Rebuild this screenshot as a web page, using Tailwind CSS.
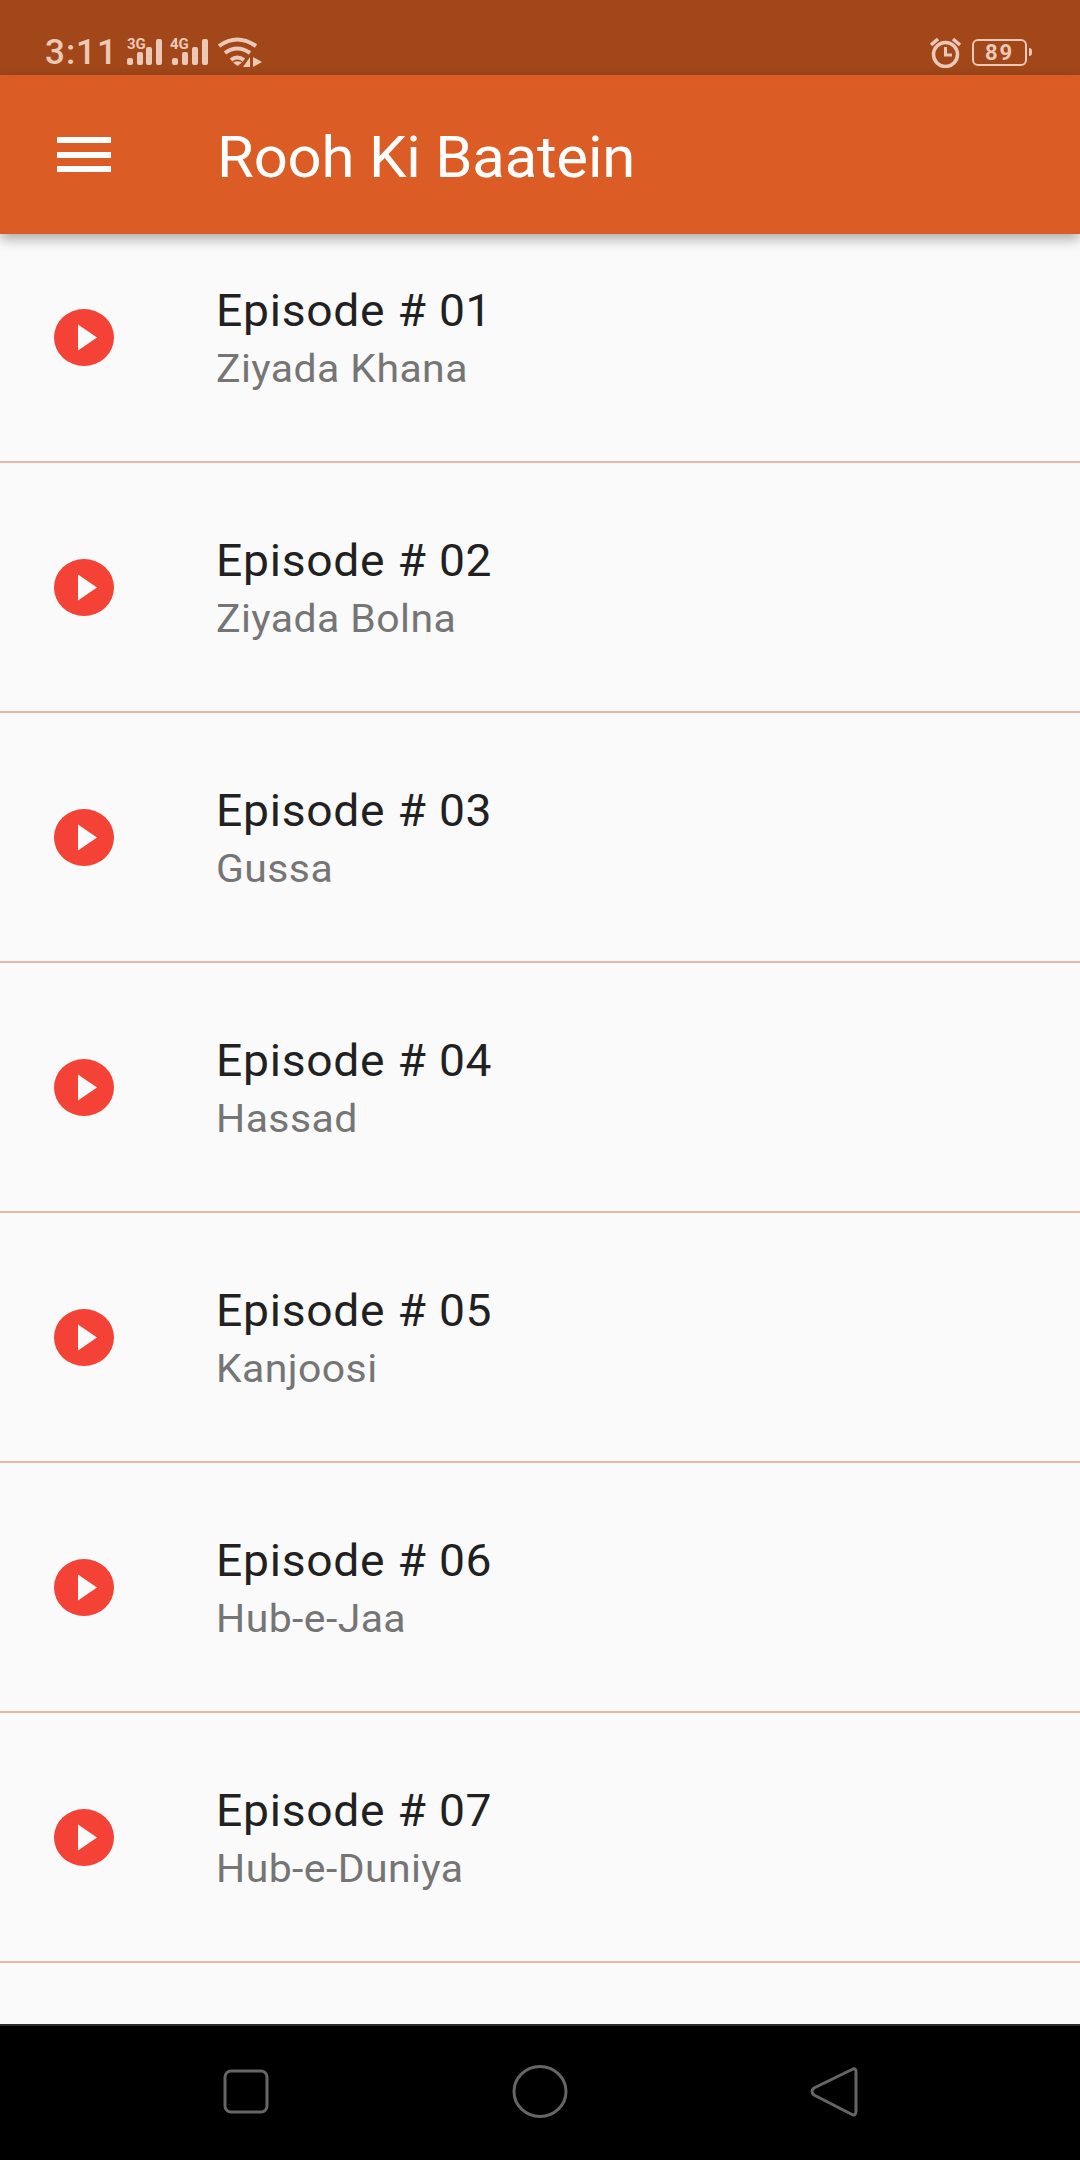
<!DOCTYPE html>
<html lang="en">
<head>
    <meta charset="UTF-8">
    <meta name="viewport" content="width=device-width, initial-scale=1.0">
    <title>Rooh Ki Baatein</title>
    <script src="https://cdn.jsdelivr.net/npm/@tailwindcss/browser@4"></script>
</head>
<body class="bg-[#fafafa] font-['Roboto',sans-serif]">
<div class="w-[1080px] h-[2160px] flex flex-col overflow-hidden">

    <!-- status bar -->
    <div class="h-[75px] shrink-0 bg-[#a1471a] text-[#ecc8b6] relative">
        <span class="absolute left-[45px] top-[33px] text-[35px] leading-[40px] tracking-[1px] font-medium">3:11</span>
        <svg class="absolute left-[127px] top-[38px]" width="82" height="28" viewBox="0 0 82 28" fill="currentColor">
            <rect x="0" y="20" width="6" height="7" rx="2"/><rect x="10" y="14" width="6" height="13" rx="2"/><rect x="19" y="9" width="6" height="18" rx="2"/><rect x="29" y="1" width="6" height="26" rx="2"/>
            <rect x="45" y="20" width="6" height="7" rx="2"/><rect x="55" y="14" width="6" height="13" rx="2"/><rect x="65" y="9" width="6" height="18" rx="2"/><rect x="75" y="1" width="6" height="26" rx="2"/>
        </svg>
        <span class="absolute left-[127px] top-[35px] text-[15px] leading-[18px] font-bold">3G</span>
        <span class="absolute left-[170px] top-[35px] text-[15px] leading-[18px] font-bold">4G</span>
        <svg class="absolute left-[217px] top-[36px]" width="46" height="32" viewBox="0 0 46 32" fill="none" stroke="currentColor" stroke-width="4">
            <path d="M2 10 Q20 -3 39 10"/><path d="M8 17 Q20 8 33 17"/><path d="M14 24 Q20 19 27 24"/>
            <path d="M20.500 30 L16 26.500 Q20.500 24 25 26.500 Z" fill="currentColor" stroke="none"/>
            <path d="M33 21 V31 H26 Z M36 21 V31 L45 26 Z" fill="currentColor" stroke="none"/>
        </svg>

        <svg class="absolute left-[930px] top-[37px]" width="32" height="31" viewBox="0 0 32 31" fill="none" stroke="currentColor">
            <circle cx="15.500" cy="17.500" r="12" stroke-width="3.500"/>
            <path d="M15.500 10 V18 H22" stroke-width="3"/>
            <path d="M1 8 L8 2 M23 2 L30 8" stroke-width="3.500"/>
        </svg>
        <div class="absolute left-[972px] top-[39px] w-[55px] h-[27px] rounded-[6px] border-2 border-[#ecc8b6] flex items-center justify-center text-[22px] leading-none font-bold tracking-[2px]">89</div>
        <div class="absolute left-[1029px] top-[48px] w-[3px] h-[8px] rounded-r-sm bg-[#ecc8b6]"></div>
    </div>

    <!-- app bar -->
    <header class="h-[159px] shrink-0 bg-[#db5c24] shadow-[0_5px_12px_rgba(0,0,0,0.32)] relative z-10 flex items-center">
        <div class="w-[217px] pl-[57px] shrink-0">
            <div class="w-[54px] h-[35px] flex flex-col justify-between">
                <div class="h-[6px] bg-white"></div>
                <div class="h-[6px] bg-white"></div>
                <div class="h-[6px] bg-white"></div>
            </div>
        </div>
        <h1 class="text-white text-[57px] leading-[60px] tracking-[-0.2px] mt-[7px] origin-left scale-x-[1.05]">Rooh Ki Baatein</h1>
    </header>

    <!-- episodes -->
    <main class="flex-1 overflow-hidden">
        <ul class="-mt-[21px]">
            <li class="h-[250px] border-b-2 border-[#e9b8a0] flex items-center">
                <div class="w-[216px] pl-[54px] shrink-0"><svg width="60" height="57" viewBox="0 0 60 57"><ellipse cx="30" cy="28.500" rx="30" ry="28.500" fill="#f44336"/><path d="M24 15.500 L43 28.500 L24 41.500 Z" fill="#fafafa"/></svg></div>
                <div class="mt-[1px]">
                    <p class="text-[#212121] text-[44px] leading-[56px] tracking-[0.7px] origin-left scale-x-[1.05]">Episode # 01</p>
                    <p class="text-[#757575] text-[39px] leading-[48px] tracking-[0.4px] mt-[6px] origin-left scale-x-[1.05]">Ziyada Khana</p>
                </div>
            </li>
            <li class="h-[250px] border-b-2 border-[#e9b8a0] flex items-center">
                <div class="w-[216px] pl-[54px] shrink-0"><svg width="60" height="57" viewBox="0 0 60 57"><ellipse cx="30" cy="28.500" rx="30" ry="28.500" fill="#f44336"/><path d="M24 15.500 L43 28.500 L24 41.500 Z" fill="#fafafa"/></svg></div>
                <div class="mt-[1px]">
                    <p class="text-[#212121] text-[44px] leading-[56px] tracking-[0.7px] origin-left scale-x-[1.05]">Episode # 02</p>
                    <p class="text-[#757575] text-[39px] leading-[48px] tracking-[0.4px] mt-[6px] origin-left scale-x-[1.05]">Ziyada Bolna</p>
                </div>
            </li>
            <li class="h-[250px] border-b-2 border-[#e9b8a0] flex items-center">
                <div class="w-[216px] pl-[54px] shrink-0"><svg width="60" height="57" viewBox="0 0 60 57"><ellipse cx="30" cy="28.500" rx="30" ry="28.500" fill="#f44336"/><path d="M24 15.500 L43 28.500 L24 41.500 Z" fill="#fafafa"/></svg></div>
                <div class="mt-[1px]">
                    <p class="text-[#212121] text-[44px] leading-[56px] tracking-[0.7px] origin-left scale-x-[1.05]">Episode # 03</p>
                    <p class="text-[#757575] text-[39px] leading-[48px] tracking-[0.4px] mt-[6px] origin-left scale-x-[1.05]">Gussa</p>
                </div>
            </li>
            <li class="h-[250px] border-b-2 border-[#e9b8a0] flex items-center">
                <div class="w-[216px] pl-[54px] shrink-0"><svg width="60" height="57" viewBox="0 0 60 57"><ellipse cx="30" cy="28.500" rx="30" ry="28.500" fill="#f44336"/><path d="M24 15.500 L43 28.500 L24 41.500 Z" fill="#fafafa"/></svg></div>
                <div class="mt-[1px]">
                    <p class="text-[#212121] text-[44px] leading-[56px] tracking-[0.7px] origin-left scale-x-[1.05]">Episode # 04</p>
                    <p class="text-[#757575] text-[39px] leading-[48px] tracking-[0.4px] mt-[6px] origin-left scale-x-[1.05]">Hassad</p>
                </div>
            </li>
            <li class="h-[250px] border-b-2 border-[#e9b8a0] flex items-center">
                <div class="w-[216px] pl-[54px] shrink-0"><svg width="60" height="57" viewBox="0 0 60 57"><ellipse cx="30" cy="28.500" rx="30" ry="28.500" fill="#f44336"/><path d="M24 15.500 L43 28.500 L24 41.500 Z" fill="#fafafa"/></svg></div>
                <div class="mt-[1px]">
                    <p class="text-[#212121] text-[44px] leading-[56px] tracking-[0.7px] origin-left scale-x-[1.05]">Episode # 05</p>
                    <p class="text-[#757575] text-[39px] leading-[48px] tracking-[0.4px] mt-[6px] origin-left scale-x-[1.05]">Kanjoosi</p>
                </div>
            </li>
            <li class="h-[250px] border-b-2 border-[#e9b8a0] flex items-center">
                <div class="w-[216px] pl-[54px] shrink-0"><svg width="60" height="57" viewBox="0 0 60 57"><ellipse cx="30" cy="28.500" rx="30" ry="28.500" fill="#f44336"/><path d="M24 15.500 L43 28.500 L24 41.500 Z" fill="#fafafa"/></svg></div>
                <div class="mt-[1px]">
                    <p class="text-[#212121] text-[44px] leading-[56px] tracking-[0.7px] origin-left scale-x-[1.05]">Episode # 06</p>
                    <p class="text-[#757575] text-[39px] leading-[48px] tracking-[0.4px] mt-[6px] origin-left scale-x-[1.05]">Hub-e-Jaa</p>
                </div>
            </li>
            <li class="h-[250px] border-b-2 border-[#e9b8a0] flex items-center">
                <div class="w-[216px] pl-[54px] shrink-0"><svg width="60" height="57" viewBox="0 0 60 57"><ellipse cx="30" cy="28.500" rx="30" ry="28.500" fill="#f44336"/><path d="M24 15.500 L43 28.500 L24 41.500 Z" fill="#fafafa"/></svg></div>
                <div class="mt-[1px]">
                    <p class="text-[#212121] text-[44px] leading-[56px] tracking-[0.7px] origin-left scale-x-[1.05]">Episode # 07</p>
                    <p class="text-[#757575] text-[39px] leading-[48px] tracking-[0.4px] mt-[6px] origin-left scale-x-[1.05]">Hub-e-Duniya</p>
                </div>
            </li>
        </ul>
    </main>

    <!-- android nav -->
    <nav class="h-[136px] shrink-0 bg-black border-t-2 border-[#2a2a2a] relative">
        <svg class="absolute left-0 top-0" width="1080" height="134" viewBox="0 2026 1080 134" fill="none" stroke="#666666" stroke-width="3">
            <rect x="225" y="2071" width="42" height="41" rx="6"/>
            <ellipse cx="540" cy="2091.500" rx="26" ry="25"/>
            <path d="M853 2069 Q856 2068 856 2072 V2111 Q856 2117 851 2114 L814 2095 Q810 2091.500 814 2088 Z" stroke-linejoin="round"/>
        </svg>
    </nav>
</div>
</body>
</html>
